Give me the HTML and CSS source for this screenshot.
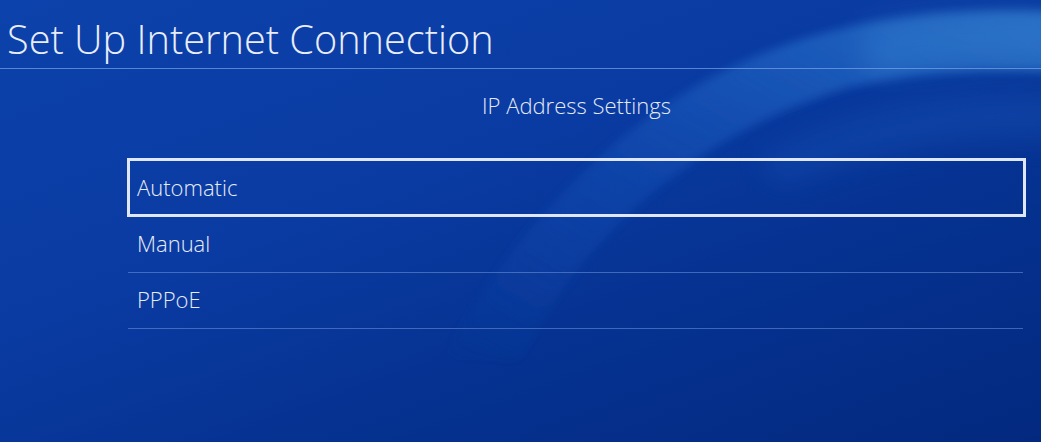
FILE: index.html
```html
<!DOCTYPE html>
<html lang="en">
<head>
    <meta charset="UTF-8">
    <meta name="viewport" content="width=device-width, initial-scale=1.0">
    <title>Set Up Internet Connection</title>
    <link rel="stylesheet" href="styles.css">
</head>
<body>

    <!-- Fondo con la onda clara -->
    <svg class="fondo" viewBox="0 0 1041 442" preserveAspectRatio="none" aria-hidden="true">
        <defs>
            <filter id="blur-suave" x="-20%" y="-20%" width="140%" height="140%">
                <feGaussianBlur stdDeviation="14"/>
            </filter>
            <filter id="blur-fino" x="-20%" y="-20%" width="140%" height="140%">
                <feGaussianBlur stdDeviation="5"/>
            </filter>
            <linearGradient id="onda" x1="0" y1="1" x2="1" y2="0">
                <stop offset="0" stop-color="#1d5fc4" stop-opacity="0"/>
                <stop offset="0.4" stop-color="#1d60c6" stop-opacity="0.4"/>
                <stop offset="0.75" stop-color="#2a77d0" stop-opacity="0.75"/>
                <stop offset="1" stop-color="#3a8ad8" stop-opacity="0.85"/>
            </linearGradient>
        </defs>
        <!-- banda ancha -->
        <path d="M440 360 C 520 220, 640 90, 800 40 C 880 15, 960 8, 1060 12 L 1060 72 C 960 68, 880 74, 820 97 C 690 142, 580 240, 520 360 Z"
              fill="url(#onda)" filter="url(#blur-fino)" opacity="0.7"/>
        <!-- brillo arriba a la derecha -->
        <path d="M860 30 C 930 12, 990 10, 1060 12 L 1060 64 C 990 62, 930 66, 870 78 Z"
              fill="#3d8fdc" opacity="0.3" filter="url(#blur-suave)"/>
        <!-- arco inferior -->
        <path d="M760 160 C 850 110, 950 92, 1060 92 L 1060 140 C 960 135, 860 150, 780 185 Z"
              fill="#1b5cc0" opacity="0.3" filter="url(#blur-suave)"/>
    </svg>

    <header class="cabecera">
        <h1>Set Up Internet Connection</h1>
    </header>

    <main class="contenido">
        <h2 class="subtitulo">IP Address Settings</h2>

        <!-- Lista de opciones -->
        <ul class="opciones">
            <li class="opcion seleccionada">Automatic</li>
            <li class="opcion">Manual</li>
            <li class="opcion">PPPoE</li>
        </ul>
    </main>

</body>
</html>
```

FILE: styles.css
```css
/* Estilos generales */
html, body {
    height: 100%;
}

body {
    margin: 0;
    padding: 0;
    font-family: "Open Sans", "Noto Sans", sans-serif;
    font-weight: 300;
    color: #e9eef8;
    background: linear-gradient(160deg, #0c42ab 0%, #0a3ba2 40%, #05318f 70%, #03297f 100%);
    overflow: hidden;
    position: relative;
}

/* Onda del fondo */
.fondo {
    position: absolute;
    top: 0;
    left: 0;
    width: 100%;
    height: 100%;
    z-index: 0;
}

.cabecera,
.contenido {
    position: relative;
    z-index: 1;
}

/* Cabecera */
.cabecera {
    height: 68px;
    border-bottom: 1px solid rgba(120, 165, 230, 0.7);
    padding-left: 7px;
}

.cabecera h1 {
    margin: 0;
    font-size: 39.7px;
    font-weight: 300;
    line-height: 78px;
}

/* Contenido */
.contenido {
    margin-left: 127px;
    width: 899px;
}

.subtitulo {
    margin: 0;
    padding-top: 22px;
    height: 89px;
    box-sizing: border-box;
    text-align: center;
    font-size: 22px;
    font-weight: 300;
    line-height: 28px;
    color: #e3eaf7;
}

/* Opciones */
.opciones {
    list-style: none;
    margin: 0;
    padding: 0;
}

.opcion {
    height: 55px;
    box-sizing: border-box;
    display: flex;
    align-items: center;
    padding: 0 0 4px 9px;
    margin-left: 1px;
    margin-right: 3px;
    height: 56px;
    border-bottom: 1px solid rgba(110, 150, 220, 0.55);
    font-size: 22px;
    color: #e6ecf8;
}

.seleccionada {
    height: 59px;
    margin: 0;
    padding-left: 7px;
    padding-bottom: 2px;
    border: 3px solid #dfe7f7;
}
```
